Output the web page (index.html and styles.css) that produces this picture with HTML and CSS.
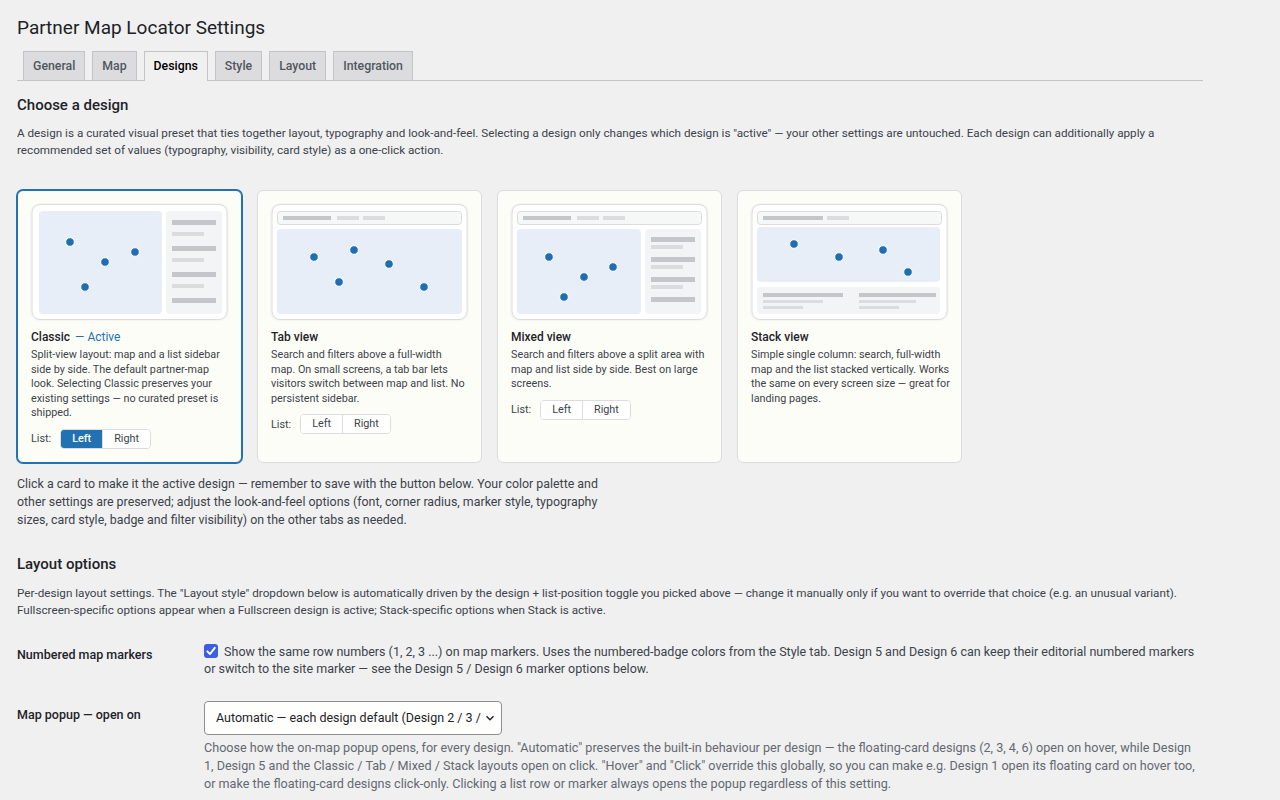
FILE: index.html
```html
<!DOCTYPE html>
<html lang="en">
<head>
  <meta charset="UTF-8">
  <title>Partner Map Locator Settings</title>
  <link rel="stylesheet" href="styles.css">
</head>
<body>
  <div class="wrap">
    <h1>Partner Map Locator Settings</h1>

    <nav class="nav-tab-wrapper">
      <a class="nav-tab" href="#">General</a>
      <a class="nav-tab" href="#">Map</a>
      <a class="nav-tab nav-tab-active" href="#">Designs</a>
      <a class="nav-tab" href="#">Style</a>
      <a class="nav-tab" href="#">Layout</a>
      <a class="nav-tab" href="#">Integration</a>
    </nav>

    <h2>Choose a design</h2>
    <p class="intro">A design is a curated visual preset that ties together layout, typography and look-and-feel. Selecting a design only changes which design is "active" — your other settings are untouched. Each design can additionally apply a recommended set of values (typography, visibility, card style) as a one-click action.</p>

    <div class="design-grid">
      <!-- Classic: map + list sidebar -->
      <div class="design-card is-active">
        <svg class="preview" viewBox="0 0 199 118" width="199" height="118">
          <rect x="0" y="0" width="199" height="118" rx="9" fill="#f6f7f4"/>
          <rect x="2" y="1.5" width="195" height="115" rx="8" fill="#fff" stroke="#dcdcde"/>
          <rect x="9" y="8" width="123" height="103" rx="4" fill="#e7eef8"/>
          <rect x="136" y="8" width="56" height="103" rx="4" fill="#f3f4f5"/>
          <rect x="142" y="17" width="44" height="5" fill="#c5c6c9"/>
          <rect x="142" y="29" width="32" height="4" fill="#dcdcde"/>
          <rect x="142" y="43" width="44" height="5" fill="#c5c6c9"/>
          <rect x="142" y="55" width="32" height="4" fill="#dcdcde"/>
          <rect x="142" y="69" width="44" height="5" fill="#c5c6c9"/>
          <rect x="142" y="81" width="32" height="4" fill="#dcdcde"/>
          <rect x="142" y="95" width="44" height="5" fill="#c5c6c9"/>
          <g fill="#1f6db3" stroke="#fff" stroke-width="1">
            <circle cx="40" cy="39" r="4.3"/>
            <circle cx="75" cy="59" r="4.3"/>
            <circle cx="105" cy="49" r="4.3"/>
            <circle cx="55" cy="84" r="4.3"/>
          </g>
        </svg>
        <h3>Classic <span class="active-tag">— Active</span></h3>
        <p>Split-view layout: map and a list sidebar side by side. The default partner-map look. Selecting Classic preserves your existing settings — no curated preset is shipped.</p>
        <div class="list-toggle">
          <span>List:</span>
          <div class="seg">
            <button class="on">Left</button>
            <button>Right</button>
          </div>
        </div>
      </div>

      <!-- Tab view: search bar + full-width map -->
      <div class="design-card">
        <svg class="preview" viewBox="0 0 199 118" width="199" height="118">
          <rect x="0" y="0" width="199" height="118" rx="9" fill="#f6f7f4"/>
          <rect x="2" y="1.5" width="195" height="115" rx="8" fill="#fff" stroke="#dcdcde"/>
          <rect x="7.5" y="8.5" width="184" height="13" rx="3" fill="#f6f7f7" stroke="#dcdcde"/>
          <rect x="13" y="13" width="48" height="4" fill="#c5c6c9"/>
          <rect x="67" y="13" width="22" height="4" fill="#dcdcde"/>
          <rect x="93" y="13" width="22" height="4" fill="#dcdcde"/>
          <rect x="7" y="26" width="185" height="85" rx="4" fill="#e7eef8"/>
          <g fill="#1f6db3" stroke="#fff" stroke-width="1">
            <circle cx="44" cy="54" r="4.3"/>
            <circle cx="84" cy="47" r="4.3"/>
            <circle cx="119" cy="61" r="4.3"/>
            <circle cx="69" cy="79" r="4.3"/>
            <circle cx="154" cy="84" r="4.3"/>
          </g>
        </svg>
        <h3>Tab view</h3>
        <p class="narrow">Search and filters above a full-width map. On small screens, a tab bar lets visitors switch between map and list. No persistent sidebar.</p>
        <div class="list-toggle">
          <span>List:</span>
          <div class="seg">
            <button>Left</button>
            <button>Right</button>
          </div>
        </div>
      </div>

      <!-- Mixed view: search bar + split map/list -->
      <div class="design-card">
        <svg class="preview" viewBox="0 0 199 118" width="199" height="118">
          <rect x="0" y="0" width="199" height="118" rx="9" fill="#f6f7f4"/>
          <rect x="2" y="1.5" width="195" height="115" rx="8" fill="#fff" stroke="#dcdcde"/>
          <rect x="7.5" y="8.5" width="184" height="13" rx="3" fill="#f6f7f7" stroke="#dcdcde"/>
          <rect x="13" y="13" width="48" height="4" fill="#c5c6c9"/>
          <rect x="67" y="13" width="22" height="4" fill="#dcdcde"/>
          <rect x="93" y="13" width="22" height="4" fill="#dcdcde"/>
          <rect x="7" y="26" width="124" height="85" rx="4" fill="#e7eef8"/>
          <rect x="135" y="26" width="56" height="85" rx="4" fill="#f3f4f5"/>
          <rect x="141" y="34" width="44" height="5" fill="#c5c6c9"/>
          <rect x="141" y="42" width="32" height="4" fill="#dcdcde"/>
          <rect x="141" y="54" width="44" height="5" fill="#c5c6c9"/>
          <rect x="141" y="62" width="32" height="4" fill="#dcdcde"/>
          <rect x="141" y="74" width="44" height="5" fill="#c5c6c9"/>
          <rect x="141" y="82" width="32" height="4" fill="#dcdcde"/>
          <rect x="141" y="94" width="44" height="5" fill="#c5c6c9"/>
          <g fill="#1f6db3" stroke="#fff" stroke-width="1">
            <circle cx="39" cy="54" r="4.3"/>
            <circle cx="74" cy="74" r="4.3"/>
            <circle cx="103" cy="64" r="4.3"/>
            <circle cx="54" cy="94" r="4.3"/>
          </g>
        </svg>
        <h3>Mixed view</h3>
        <p>Search and filters above a split area with map and list side by side. Best on large screens.</p>
        <div class="list-toggle">
          <span>List:</span>
          <div class="seg">
            <button>Left</button>
            <button>Right</button>
          </div>
        </div>
      </div>

      <!-- Stack view: search, map, list stacked -->
      <div class="design-card">
        <svg class="preview" viewBox="0 0 199 118" width="199" height="118">
          <rect x="0" y="0" width="199" height="118" rx="9" fill="#f6f7f4"/>
          <rect x="2" y="1.5" width="195" height="115" rx="8" fill="#fff" stroke="#dcdcde"/>
          <rect x="7.5" y="8.5" width="184" height="13" rx="3" fill="#f6f7f7" stroke="#dcdcde"/>
          <rect x="13" y="13" width="60" height="4" fill="#c5c6c9"/>
          <rect x="77" y="13" width="22" height="4" fill="#dcdcde"/>
          <rect x="7" y="24" width="183" height="55" rx="4" fill="#e7eef8"/>
          <rect x="7" y="84" width="183" height="27" rx="4" fill="#f3f4f5"/>
          <rect x="13" y="90" width="80" height="4" fill="#c5c6c9"/>
          <rect x="13" y="97" width="60" height="3" fill="#dcdcde"/>
          <rect x="13" y="103" width="40" height="3" fill="#dcdcde"/>
          <rect x="109" y="90" width="77" height="4" fill="#c5c6c9"/>
          <rect x="109" y="97" width="57" height="3" fill="#dcdcde"/>
          <rect x="109" y="103" width="40" height="3" fill="#dcdcde"/>
          <g fill="#1f6db3" stroke="#fff" stroke-width="1">
            <circle cx="44" cy="41" r="4.3"/>
            <circle cx="89" cy="54" r="4.3"/>
            <circle cx="133" cy="47" r="4.3"/>
            <circle cx="158" cy="69" r="4.3"/>
          </g>
        </svg>
        <h3>Stack view</h3>
        <p class="tight">Simple single column: search, full-width map and the list stacked vertically. Works the same on every screen size — great for landing pages.</p>
      </div>
    </div>

    <p class="note">Click a card to make it the active design — remember to save with the button below. Your color palette and other settings are preserved; adjust the look-and-feel options (font, corner radius, marker style, typography sizes, card style, badge and filter visibility) on the other tabs as needed.</p>

    <h2 class="section-title">Layout options</h2>
    <p class="intro layout-intro">Per-design layout settings. The "Layout style" dropdown below is automatically driven by the design + list-position toggle you picked above — change it manually only if you want to override that choice (e.g. an unusual variant). Fullscreen-specific options appear when a Fullscreen design is active; Stack-specific options when Stack is active.</p>

    <table class="form-table">
      <tr>
        <th>Numbered map markers</th>
        <td class="check-row">
          <span class="checkbox">
            <svg viewBox="0 0 14 14" width="14" height="14"><path d="M3.3 7.3 L6 10 L10.8 3.8" fill="none" stroke="#fff" stroke-width="1.9" stroke-linecap="round" stroke-linejoin="round"/></svg>
          </span>
          Show the same row numbers (1, 2, 3 ...) on map markers. Uses the numbered-badge colors from the Style tab. Design 5 and Design 6 can keep their editorial numbered markers or switch to the site marker — see the Design 5 / Design 6 marker options below.
        </td>
      </tr>
      <tr>
        <th class="select-label">Map popup — open on</th>
        <td>
          <div class="select">
            <span class="select-text">Automatic — each design default (Design 2 / 3 / 4 / 6 on hover)</span>
            <svg class="chevron" viewBox="0 0 12 12" width="12" height="12"><path d="M2.5 4.3 L6 7.8 L9.5 4.3" fill="none" stroke="#1d2327" stroke-width="1.4"/></svg>
          </div>
          <p class="description">Choose how the on-map popup opens, for every design. "Automatic" preserves the built-in behaviour per design — the floating-card designs (2, 3, 4, 6) open on hover, while Design 1, Design 5 and the Classic / Tab / Mixed / Stack layouts open on click. "Hover" and "Click" override this globally, so you can make e.g. Design 1 open its floating card on hover too, or make the floating-card designs click-only. Clicking a list row or marker always opens the popup regardless of this setting.</p>
        </td>
      </tr>
    </table>
  </div>
</body>
</html>
```

FILE: styles.css
```css
body {
  margin: 0;
  background: #f0f0f1;
  color: #1d2327;
  font-family: Roboto, "Liberation Sans", Arial, sans-serif;
  font-size: 12px;
  line-height: 1.45;
}
.wrap {
  width: 1186px;
  padding: 0 0 0 17px;
}
h1 {
  font-size: 19px;
  font-weight: 400;
  margin: 0;
  padding: 15px 0 0 0;
  line-height: 26px;
}

/* tabs */
.nav-tab-wrapper {
  display: flex;
  align-items: flex-end;
  margin-top: 10px;
  border-bottom: 1px solid #c3c4c7;
  height: 29px;
}
.nav-tab {
  margin-left: 6px;
  padding: 3px 9px 3px 9px;
  line-height: 22px;
  font-size: 12.3px;
  font-weight: 500;
  color: #50575e;
  text-decoration: none;
  background: #dcdcde;
  border: 1px solid #c3c4c7;
  border-bottom: none;
}
.nav-tab + .nav-tab {
  margin-left: 7px;
}
.nav-tab-active {
  background: #f0f0f1;
  color: #000;
  margin-bottom: -1px;
  padding-bottom: 4px;
}

h2 {
  font-size: 15px;
  font-weight: 500;
  margin: 14px 0 0 0;
  line-height: 20px;
}
.intro {
  font-size: 11.7px;
  color: #3c434a;
  margin: 10px 0 0 0;
  line-height: 17px;
}

/* design cards */
.design-grid {
  display: grid;
  grid-template-columns: repeat(4, 225px);
  gap: 15px;
  margin-top: 31px;
}
.design-card {
  background: #fdfdf8;
  border: 1px solid #dcdcde;
  border-radius: 6px;
  padding: 12px 12px 13px 12px;
}
.design-card.is-active {
  border-color: #2271b1;
  box-shadow: 0 0 0 1px #2271b1;
}
.preview {
  display: block;
}
.design-card h3 {
  font-size: 12px;
  font-weight: 500;
  margin: 8px 0 0 1px;
  line-height: 16px;
  color: #1d2327;
}
.active-tag {
  color: #2271b1;
  font-weight: 400;
  margin-left: 2px;
}
.design-card p {
  font-size: 10.8px;
  line-height: 14.6px;
  color: #3c434a;
  margin: 3px 0 0 1px;
}
.design-card p.narrow {
  margin-right: 4px;
}
.design-card p.tight {
  margin-right: -1px;
}
.list-toggle {
  display: flex;
  align-items: center;
  gap: 9px;
  margin: 8px 0 0 1px;
  font-size: 10.8px;
  color: #3c434a;
}
.seg {
  display: flex;
  border: 1px solid #dcdcde;
  border-radius: 4px;
  overflow: hidden;
  background: #fff;
}
.seg button {
  font-family: inherit;
  font-size: 10.8px;
  color: #3c434a;
  background: #fff;
  border: none;
  padding: 0 11px;
  height: 18px;
  line-height: 18px;
  cursor: pointer;
}
.seg button + button {
  border-left: 1px solid #dcdcde;
}
.seg button.on {
  background: #2271b1;
  color: #fff;
  font-weight: 500;
}

.note {
  font-size: 12.4px;
  color: #3c434a;
  width: 605px;
  margin: 12px 0 0 0;
  line-height: 18px;
}
.section-title {
  margin-top: 25px;
}
.layout-intro {
  margin-top: 11px;
}

/* settings rows */
.form-table {
  border-collapse: collapse;
  margin-top: 14px;
  width: 1186px;
  font-size: 12.5px;
}
.form-table th {
  width: 187px;
  text-align: left;
  vertical-align: top;
  font-weight: 500;
  padding: 13px 0 0 0;
  line-height: 18px;
  color: #1d2327;
}
.form-table td {
  vertical-align: top;
  padding: 10px 0 0 0;
  color: #3c434a;
  line-height: 17.5px;
}
.checkbox {
  display: inline-block;
  width: 14px;
  height: 14px;
  background: #3b5fe0;
  border-radius: 3px;
  vertical-align: -2px;
  margin-right: 3px;
}
.checkbox svg {
  display: block;
}
.form-table th.select-label {
  padding-top: 28px;
}
.form-table td .select {
  margin-top: 13px;
}
.select {
  position: relative;
  width: 271px;
  height: 32px;
  padding: 0 14px 0 11px;
  border: 1px solid #8c8f94;
  border-radius: 4px;
  background: #fefefd;
  display: flex;
  align-items: center;
  font-size: 12.5px;
  color: #1d2327;
}
.select-text {
  white-space: nowrap;
  overflow: hidden;
  flex: 1;
}
.chevron {
  position: absolute;
  right: 5px;
  top: 10px;
  background: #fefefd;
}
.description {
  font-size: 12.6px;
  color: #646970;
  margin: 4px 0 0 0;
  line-height: 18px;
}
```
